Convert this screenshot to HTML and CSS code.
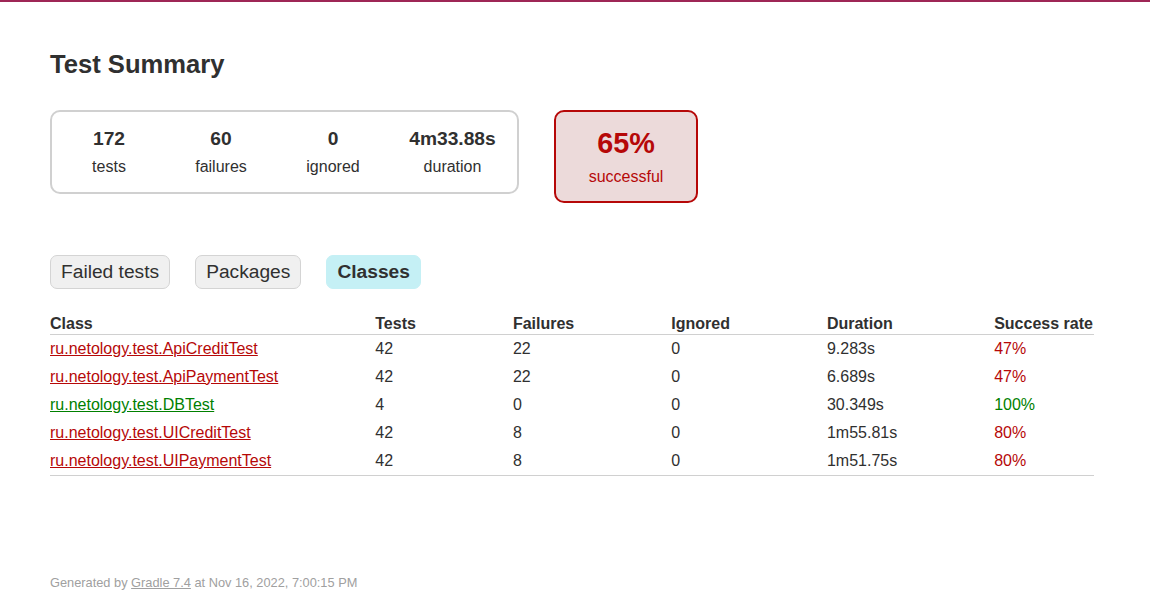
FILE: index.html
```html
<!DOCTYPE html>
<html>
<head>
<meta charset="utf-8">
<title>Test results - Test Summary</title>
<link rel="stylesheet" href="styles.css">
</head>
<body>
<div class="content">
  <h1 class="title">Test Summary</h1>
  <div class="summary">
    <div class="summary-group">
      <div class="info-box"><div class="counter">172</div><p>tests</p></div>
      <div class="info-box"><div class="counter">60</div><p>failures</p></div>
      <div class="info-box"><div class="counter">0</div><p>ignored</p></div>
      <div class="info-box info-duration"><div class="counter">4m33.88s</div><p>duration</p></div>
    </div>
    <div class="info-box success-rate failures">
      <div class="percent">65%</div>
      <p>successful</p>
    </div>
  </div>
  <ul class="tab-links">
    <li><a href="#tab0">Failed tests</a></li>
    <li><a href="#tab1">Packages</a></li>
    <li class="selected"><a href="#tab2">Classes</a></li>
  </ul>
  <div class="tab">
    <table class="results">
      <thead>
        <tr><th>Class</th><th>Tests</th><th>Failures</th><th>Ignored</th><th>Duration</th><th>Success rate</th></tr>
      </thead>
      <tbody>
        <tr><td class="failures"><a href="#">ru.netology.test.ApiCreditTest</a></td><td>42</td><td>22</td><td>0</td><td>9.283s</td><td class="failures">47%</td></tr>
        <tr><td class="failures"><a href="#">ru.netology.test.ApiPaymentTest</a></td><td>42</td><td>22</td><td>0</td><td>6.689s</td><td class="failures">47%</td></tr>
        <tr><td class="success"><a href="#">ru.netology.test.DBTest</a></td><td>4</td><td>0</td><td>0</td><td>30.349s</td><td class="success">100%</td></tr>
        <tr><td class="failures"><a href="#">ru.netology.test.UICreditTest</a></td><td>42</td><td>8</td><td>0</td><td>1m55.81s</td><td class="failures">80%</td></tr>
        <tr><td class="failures"><a href="#">ru.netology.test.UIPaymentTest</a></td><td>42</td><td>8</td><td>0</td><td>1m51.75s</td><td class="failures">80%</td></tr>
      </tbody>
    </table>
  </div>
  <div class="footer">
    <p>Generated by <a href="#">Gradle 7.4</a> at Nov 16, 2022, 7:00:15 PM</p>
  </div>
</div>
</body>
</html>
```

FILE: styles.css
```css
html, body {
  margin: 0;
  padding: 0;
}
body {
  font-family: "Liberation Sans", Arial, sans-serif;
  font-size: 16px;
  color: #303030;
  border-top: 2px solid #9e2656;
}
a, a:visited {
  color: #303030;
}
.content {
  padding: 30px 50px;
}
.title {
  font-size: 25.6px;
  margin: 18px 0 10px;
  white-space: nowrap;
}
.summary {
  display: flex;
  align-items: flex-start;
  margin-top: 31px;
  margin-bottom: 42px;
}
.summary-group {
  display: flex;
  padding: 0 1px;
  border: solid 2px #d0d0d0;
  border-radius: 10px;
}
.summary-group .info-box {
  margin: 1px 1px;
}
.info-box {
  width: 110px;
  padding: 15px 0;
  text-align: center;
}
.info-box p {
  margin: 0;
}
.info-duration {
  width: 125px;
}
.counter, .percent {
  font-size: 19.2px;
  font-weight: bold;
  margin-bottom: 8px;
}
.success-rate {
  width: 140px;
  margin-left: 35px;
  border: solid 2px #d0d0d0;
  border-radius: 10px;
}
.success-rate .percent {
  font-size: 28.8px;
}
.success, .success a, .success a:visited {
  color: #008000;
}
.failures, .failures a, .failures a:visited {
  color: #b60808;
}
.success-rate.failures {
  background-color: #ecdada;
  border-color: #b60808;
}
.tab-links {
  display: flex;
  margin: 0 0 15px;
  padding: 10px 0;
  list-style: none;
}
.tab-links li {
  padding: 5px 10px;
  margin-right: 25px;
  border: solid 1px #d4d4d4;
  border-radius: 7px;
  background-color: #f0f0f0;
}
.tab-links li.selected {
  background-color: #c5f0f5;
  border-color: #c5f0f5;
}
.tab-links li.selected a {
  font-weight: bold;
}
.tab-links a {
  display: block;
  font-size: 19.2px;
  text-decoration: none;
}
.results {
  border-collapse: collapse;
  border-bottom: solid #d0d0d0 1px;
}
.results th {
  text-align: left;
  white-space: nowrap;
  padding: 1px 1px 1px 96px;
  border-bottom: solid #d0d0d0 1px;
}
.results td {
  white-space: nowrap;
  padding: 5px 1px 5px 96px;
}
.results th:first-child, .results td:first-child {
  padding-left: 0;
}
.footer {
  margin-top: 99px;
  font-size: 12.8px;
  white-space: nowrap;
  color: #a0a0a0;
}
.footer a, .footer a:visited {
  color: #a0a0a0;
}
.footer p {
  margin: 0;
}
```
